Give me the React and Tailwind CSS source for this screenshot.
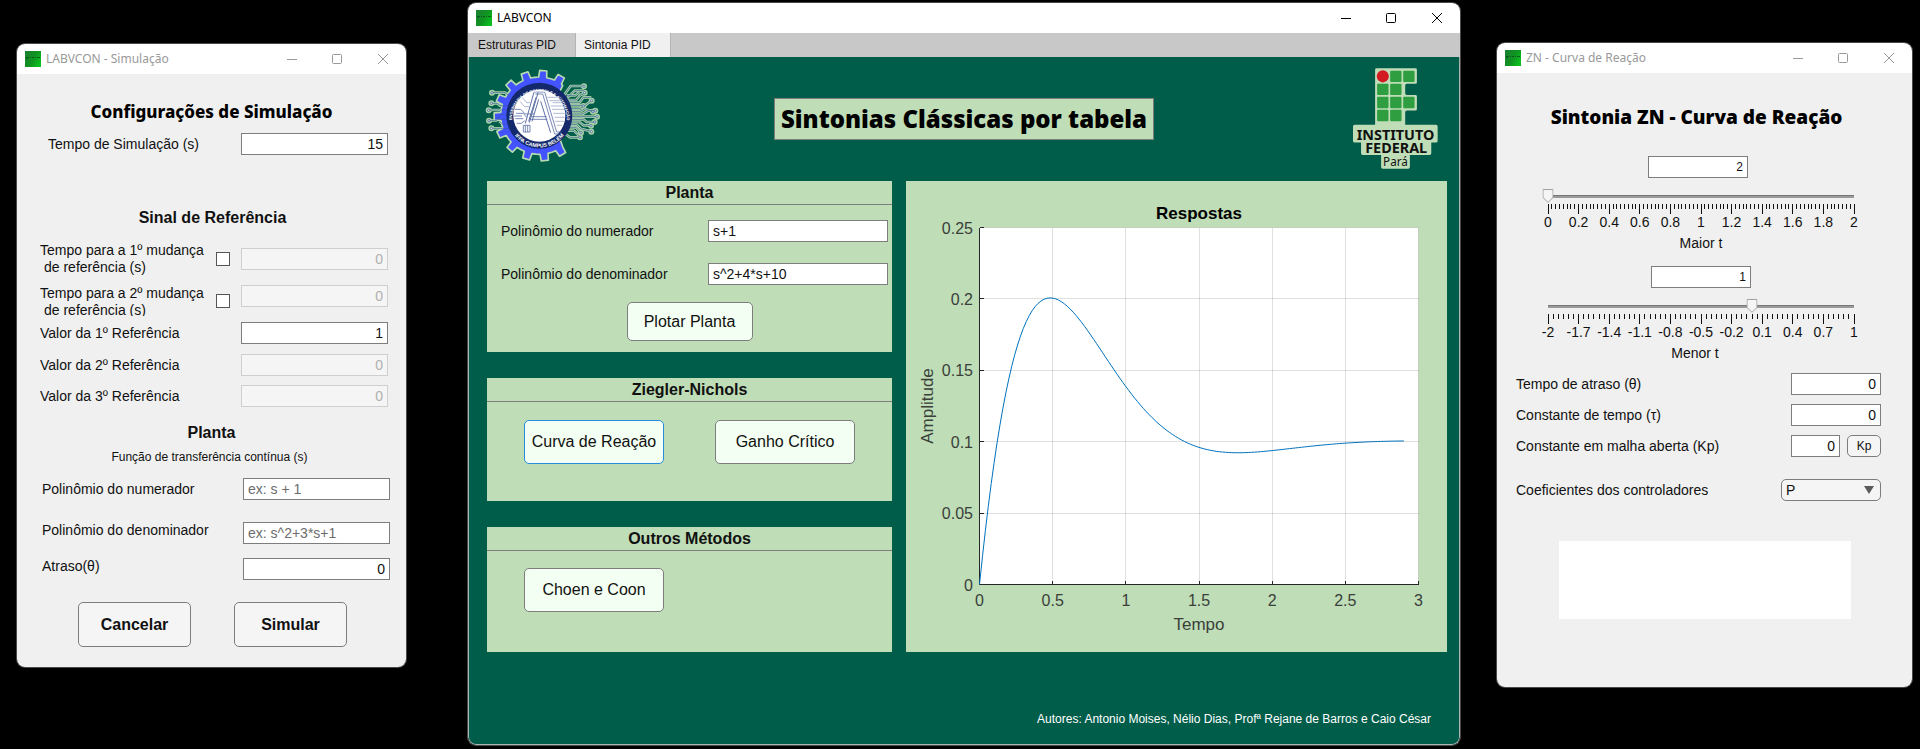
import { useState } from "react";

const cx = (...parts) => parts.filter(Boolean).join(" ");

function AppIcon() {
  return (
    <svg viewBox="0 0 16 16" className="h-4 w-4 shrink-0" aria-hidden="true">
      <defs>
        <linearGradient id="app-icon" x1="0" y1="0" x2="1" y2="0.6">
          <stop offset="0" stopColor="#1c7f34" />
          <stop offset="0.6" stopColor="#0f9420" />
          <stop offset="1" stopColor="#0bbd1f" />
        </linearGradient>
      </defs>
      <rect width="16" height="16" fill="url(#app-icon)" />
      <path d="M1 6.5h3M2 7v1.500M5 6.500h1M7 6.500h2M10 6.500h1M12 6.500h3" stroke="#0c4a1a" strokeWidth="1" fill="none" opacity="0.8" />
    </svg>
  );
}

function WindowFrame({ title, active, className, children }) {
  return (
    <section
      className={cx(
        "flex min-w-0 basis-0 flex-col overflow-hidden rounded-lg ring-1 ring-[#4a4a4a]",
        className
      )}
    >
      <header
        className={cx(
          "flex h-[30px] items-center bg-white pl-2",
          active ? "text-black" : "text-[#999999]"
        )}
      >
        <AppIcon />
        <h1 className="ml-[5px] grow font-['Noto_Sans',sans-serif] text-xs leading-4">{title}</h1>
        <div className="flex items-center">
          <button type="button" aria-label="Minimizar" className="grid h-[30px] w-[45px] place-items-center">
            <svg viewBox="0 0 10 10" className="h-[10px] w-[10px]"><path d="M0 5.500h10" stroke="currentColor" /></svg>
          </button>
          <button type="button" aria-label="Maximizar" className="grid h-[30px] w-[46px] place-items-center">
            <svg viewBox="0 0 10 10" className="h-[10px] w-[10px]"><rect x="0.500" y="0.500" width="9" height="9" rx="1" fill="none" stroke="currentColor" /></svg>
          </button>
          <button type="button" aria-label="Fechar" className="grid h-[30px] w-[46px] place-items-center">
            <svg viewBox="0 0 10 10" className="h-[10px] w-[10px]"><path d="M0 0L10 10M10 0L0 10" stroke="currentColor" /></svg>
          </button>
        </div>
      </header>
      {children}
    </section>
  );
}

const heading = "text-center font-['Noto_Sans',sans-serif] whitespace-nowrap text-black";
const field =
  "h-[22px] border border-[#7d7d7d] bg-white px-1 text-sm text-[#111] disabled:border-[#cfcfcf] disabled:bg-[#f5f5f5] disabled:text-[#b0b0b0] placeholder:text-[#6c6c6c]";

function SimRow({ id, label, value, disabled, className }) {
  return (
    <div className={cx("flex items-center justify-between pr-[18px]", className)}>
      <label htmlFor={id}>{label}</label>
      <input id={id} defaultValue={value} disabled={disabled} className={cx(field, "w-[147px] text-right")} />
    </div>
  );
}

function SimCheckRow({ id, label, className, checkClassName, clip }) {
  return (
    <div className={cx("flex pr-[18px] pl-[23px]", className)}>
      <label htmlFor={id} className={cx("grow leading-[17px]", clip && "h-[31px] overflow-hidden")}>
        {label}
        <br />
        <span className="pl-1">de referência (s)</span>
      </label>
      <input
        type="checkbox"
        aria-label={`Ativar ${label}`}
        className={cx("mr-[11px] h-[14px] w-[14px] shrink-0 appearance-none border border-[#555] bg-white checked:bg-[#2080d0]", checkClassName)}
      />
      <input id={id} defaultValue="0" disabled className={cx(field, "w-[147px] shrink-0 text-right")} />
    </div>
  );
}

function SimulationWindow() {
  const button =
    "h-[45px] w-[113px] rounded-[5px] border border-[#7d7d7d] bg-[#f5f5f5] text-base font-bold";
  return (
    <WindowFrame title="LABVCON - Simulação" className="mt-[44px] ml-[17px] grow-[389]">
      <form className="bg-[#f0f0f0] pt-[26px] pb-5" onSubmit={(e) => e.preventDefault()}>
        <h2 className={cx(heading, "text-[17px] leading-6 font-extrabold")}>Configurações de Simulação</h2>
        <SimRow id="tsim" label="Tempo de Simulação (s)" value="15" className="mt-[9px] pl-[31px]" />
        <h3 className="mt-[53px] pl-[2px] text-center text-base leading-5 font-bold">Sinal de Referência</h3>
        <SimCheckRow id="m1" label="Tempo para a 1º mudança" className="mt-[14px] items-center" />
        <SimCheckRow id="m2" label="Tempo para a 2º mudança" className="mt-[9px] h-8 items-start" checkClassName="self-center" clip />
        <SimRow id="r1" label="Valor da 1º Referência" value="1" className="mt-[5px] pl-[23px]" />
        <SimRow id="r2" label="Valor da 2º Referência" value="0" disabled className="mt-[10px] pl-[23px]" />
        <SimRow id="r3" label="Valor da 3º Referência" value="0" disabled className="mt-[9px] pl-[23px]" />
        <h3 className="mt-[16px] text-center text-base leading-5 font-bold">Planta</h3>
        <p className="mt-[6px] pr-1 text-center text-xs leading-4">Função de transferência contínua (s)</p>
        <div className="flex flex-col gap-[14px] pt-[13px] pr-4 pl-[25px] leading-4">
          <div className="mb-2 flex items-center justify-between">
            <label htmlFor="snum">Polinômio do numerador</label>
            <input id="snum" placeholder="ex: s + 1" className={cx(field, "w-[147px]")} />
          </div>
          <div className="flex items-start justify-between">
            <label htmlFor="sden">Polinômio do denominador</label>
            <input id="sden" placeholder="ex: s^2+3*s+1" className={cx(field, "w-[147px]")} />
          </div>
          <div className="flex items-start justify-between">
            <label htmlFor="satr">Atraso(θ)</label>
            <input id="satr" defaultValue="0" className={cx(field, "w-[147px] text-right")} />
          </div>
        </div>
        <div className="mt-[22px] flex justify-center gap-[43px] pl-[2px]">
          <button type="button" className={button}>Cancelar</button>
          <button type="submit" className={button}>Simular</button>
        </div>
      </form>
    </WindowFrame>
  );
}

/* Gear outline: 11 teeth, 24 degrees apart, open towards the circuit traces on the right. */
function gearPath() {
  const pt = (r, deg) => {
    const a = (deg * Math.PI) / 180;
    return `${(180 + r * Math.cos(a)).toFixed(1)} ${(167 - r * Math.sin(a)).toFixed(1)}`;
  };
  const out = [`M${pt(84, 48)}L${pt(114, 52)}`];
  for (let k = 0; k < 11; k += 1) {
    const c = 61 + 24 * k;
    out.push(`L${pt(116, c - 6)}L${pt(136, c - 4.5)}L${pt(136, c + 4.5)}L${pt(116, c + 6)}`);
    if (k < 10) out.push(`L${pt(116, c + 12)}`);
  }
  out.push(`L${pt(84, 314)}Z`);
  return out.join("");
}

const TRACES = [
  "M92 110L78 98H40", "M88 137H62L54 130H38", "M86 150H30", "M88 163H64L52 181H30", "M86 178H58L50 170", "M88 205H38", "M92 192H70L60 184",
  "M254 106L274 78H312", "M260 118L286 92H314", "M262 106H288L300 96", "M266 120H290L302 106L316 100", "M268 128H300L312 112H336", "M270 136H318L336 122",
  "M272 146H300L314 138", "M272 154H304L316 146L340 155", "M274 162H310L326 152H346", "M274 170H352", "M274 178H312L322 186H345",
  "M272 186H300L312 196H334", "M270 194H292L304 206L334 214", "M268 202H290L304 218", "M264 212H284L300 228", "M258 222L272 232H302",
];
const PADS = [
  [38, 98], [36, 130], [28, 151], [29, 182], [36, 205], [314, 79], [316, 98], [337, 122], [312, 138], [341, 155], [348, 152], [353, 170], [346, 186],
  [335, 197], [336, 215], [305, 218], [302, 232],
];

function CourseLogo() {
  return (
    <svg viewBox="23 24 342 285" className="h-[95px] w-[114px] shrink-0 overflow-visible" role="img" aria-label="Engenharia de Controle e Automação">
      <g fill="none" stroke="#a9d2a6" strokeWidth="8" strokeLinejoin="round">
        {TRACES.map((d) => <path key={d} d={d} />)}
        {PADS.map(([x, y]) => <circle key={`${x}-${y}`} cx={x} cy={y} r="5" />)}
      </g>
      <path d={gearPath()} fill="#4353ff" stroke="#b7dbb0" strokeWidth="5" strokeLinejoin="round" />
      <g fill="none" stroke="#34599a" strokeWidth="2">
        {TRACES.map((d) => <path key={d} d={d} />)}
        {PADS.map(([x, y]) => <circle key={`${x}-${y}`} cx={x} cy={y} r="3.500" fill="#cfe3d8" />)}
      </g>
      <circle cx="180" cy="167" r="99" fill="#14296b" />
      <circle cx="180" cy="167" r="78" fill="#fff" />
      <g fill="none" stroke="#5f72a8" strokeWidth="2.500">
        <path d="M164 96H196L232 216H246M168 102H190L226 222H240" />
        <path d="M164 96L138 190M170 112L148 184M178 118L158 184M184 124L214 218M176 98L150 188" strokeWidth="3" />
        <path d="M152 170H202M150 178H204" />
        <path d="M132 196H152V216H132ZM138 196V216M145 196V216" />
        <path d="M106 148H124L138 162H164M110 160H132L142 172M108 176H132M112 190H126L136 182M104 168H128" />
        <path d="M204 112H250M210 122H254M220 128H252M214 138H254M218 148H256M222 160H256M226 172H256M228 184H254M232 196H248" strokeWidth="1.500" />
        <path d="M122 124L136 140H150M128 112L142 128H152" strokeWidth="1.500" />
      </g>
      <defs>
        <path id="ring-top" d="M98 177A82 82 0 1 1 262 177" />
        <path id="ring-bottom" d="M85 167A95 95 0 0 0 275 167" />
      </defs>
      <g fill="#fff" fontFamily="'Liberation Sans Narrow','Liberation Sans',sans-serif" fontWeight="700" textAnchor="middle">
        <text fontSize="12"><textPath href="#ring-top" startOffset="50%">ENGENHARIA DE CONTROLE E AUTOMAÇÃO</textPath></text>
        <text fontSize="16"><textPath href="#ring-bottom" startOffset="50%">IFPA CAMPUS BELÉM</textPath></text>
      </g>
    </svg>
  );
}

function InstituteLogo() {
  const cells = [[1, 0], [2, 0], [0, 1], [1, 1], [0, 2], [1, 2], [2, 2], [0, 3], [1, 3]];
  return (
    <svg viewBox="1179 203 254 302" className="h-[101px] w-[85px] shrink-0" role="img" aria-label="Instituto Federal Pará">
      <path
        fill="#bfddb7"
        d="M1249 204H1366Q1370 204 1370 208V246Q1370 250 1366 250H1340Q1335 250 1335 255V278Q1335 284 1340 284H1366Q1370 284 1370 288V326Q1370 330 1366 330H1340Q1335 330 1335 335V373H1427Q1432 373 1432 378V421Q1432 426 1427 426H1413V458Q1413 463 1408 463H1349V499Q1349 504 1344 504H1268Q1263 504 1263 499V463H1208Q1203 463 1203 458V426H1184Q1179 426 1179 421V378Q1179 373 1184 373H1245V208Q1245 204 1249 204Z"
      />
      <circle cx="1268" cy="228" r="18" fill="#d11b20" />
      {cells.map(([c, r]) => (
        <rect key={`${c}${r}`} x={1251 + c * 39} y={211 + r * 39} width="34" height="34" rx="3" fill="#2f9e41" />
      ))}
      <text fill="#111" textAnchor="middle" fontFamily="'Noto Sans',sans-serif" fontSize="43" fontWeight="700">
        <tspan x="1306" y="417">INSTITUTO</tspan>
        <tspan x="1308" y="456">FEDERAL</tspan>
        <tspan x="1306" y="495" fontSize="35" fontWeight="400">Pará</tspan>
      </text>
    </svg>
  );
}

function Panel({ title, className, children }) {
  return (
    <section className={cx("bg-[#bfddb7]", className)}>
      <h3 className="h-6 border-b border-[#7d7d7d] text-center text-base leading-[23px] font-bold">{title}</h3>
      {children}
    </section>
  );
}

const panelButton = "rounded-[5px] border bg-[#f3fff2] text-base";

function ResponseChart() {
  const L = 73.5, T = 46.5, W = 439, H = 357;
  const x = (t) => L + (t / 3) * W;
  const y = (v) => T + H - (v / 0.25) * H;
  const w = Math.sqrt(6);
  const pts = [];
  for (let i = 0; i <= 145; i += 1) {
    const t = i * 0.02;
    const v = 0.1 + Math.exp(-2 * t) * (-0.1 * Math.cos(w * t) + (0.8 / w) * Math.sin(w * t));
    pts.push(`${x(t).toFixed(2)},${y(v).toFixed(2)}`);
  }
  const xs = [0, 0.5, 1, 1.5, 2, 2.5, 3];
  const ys = [0, 0.05, 0.1, 0.15, 0.2, 0.25];
  return (
    <svg viewBox="0 0 541 471" className="block w-full bg-[#bfddb7]" fontFamily="'Liberation Sans',Arial,sans-serif" role="img" aria-label="Respostas: amplitude por tempo">
      <rect x={L} y={T} width={W} height={H} fill="#fff" />
      <g stroke="#262626" strokeOpacity="0.15" shapeRendering="crispEdges">
        {xs.slice(1).map((t) => <line key={t} x1={x(t)} x2={x(t)} y1={T} y2={T + H} />)}
        {ys.slice(1).map((v) => <line key={v} x1={L} x2={L + W} y1={y(v)} y2={y(v)} />)}
      </g>
      <g stroke="#262626" fill="none" shapeRendering="crispEdges">
        <path d={`M${L} ${T}V${T + H}H${L + W}`} />
        {xs.map((t) => <line key={t} x1={x(t)} x2={x(t)} y1={T + H} y2={T + H - 4} />)}
        {ys.map((v) => <line key={v} x1={L} x2={L + 4} y1={y(v)} y2={y(v)} />)}
      </g>
      <polyline points={pts.join(" ")} fill="none" stroke="#0072bd" />
      <g fill="#3a3f3a" fontSize="16" textAnchor="middle">
        {xs.map((t) => <text key={t} x={x(t)} y="425">{t}</text>)}
      </g>
      <g fill="#3a3f3a" fontSize="16" textAnchor="end">
        {ys.map((v) => <text key={v} x="67" y={y(v) + 6}>{v}</text>)}
      </g>
      <text x="293" y="38" fontSize="17" fontWeight="700" textAnchor="middle" fill="#000">Respostas</text>
      <text x="293" y="449" fontSize="17" textAnchor="middle" fill="#3a3f3a">Tempo</text>
      <text transform="translate(27 225) rotate(-90)" fontSize="17" textAnchor="middle" fill="#3a3f3a">Amplitude</text>
    </svg>
  );
}

function TuningWindow() {
  return (
    <WindowFrame title="LABVCON" active className="mt-[3px] ml-[62px] grow-[992]">
      <nav className="flex h-6 bg-[#c8c8c8] text-xs" role="tablist">
        <button type="button" role="tab" aria-selected="false" className="w-[107px] pl-[10px] text-left">Estruturas PID</button>
        <button type="button" role="tab" aria-selected="true" className="w-[96px] border-x border-[#b4b4b4] bg-[#f0f0f0] pl-2 text-left">Sintonia PID</button>
      </nav>
      <div className="rounded-b-lg border-x border-b border-[#a9b5b1] bg-[#005d4a] pt-[11px] pr-3 pb-[17px] pl-[18px]">
        <div className="flex items-start justify-between pr-[9px]">
          <CourseLogo />
          <h2 className={cx(heading, "mt-[30px] mr-[26px] h-[42px] w-[380px] border border-[#7d7d7d] bg-[#bfddb7] text-2xl leading-10 font-black")}>
            Sintonias Clássicas por tabela
          </h2>
          <InstituteLogo />
        </div>
        <div className="mt-3 flex items-start gap-[14px]">
          <div className="flex min-w-0 grow-[405] basis-0 flex-col gap-[26px]">
            <Panel title="Planta" className="pb-[11px]">
              <div className="flex flex-col gap-[21px] pt-[15px] pr-1 pl-[14px]">
                <div className="flex items-center justify-between">
                  <label htmlFor="pnum">Polinômio do numerador</label>
                  <input id="pnum" defaultValue="s+1" className={cx(field, "w-[180px]")} />
                </div>
                <div className="flex items-center justify-between">
                  <label htmlFor="pden">Polinômio do denominador</label>
                  <input id="pden" defaultValue="s^2+4*s+10" className={cx(field, "w-[180px]")} />
                </div>
              </div>
              <button type="button" className={cx(panelButton, "mx-auto mt-[17px] block h-[39px] w-[126px] border-[#7d7d7d]")}>Plotar Planta</button>
            </Panel>
            <Panel title="Ziegler-Nichols" className="pb-[37px]">
              <div className="flex justify-between pt-[18px] pr-[37px] pl-[37px]">
                <button type="button" className={cx(panelButton, "h-11 w-[140px] border-[#268cdd]")}>Curva de Reação</button>
                <button type="button" className={cx(panelButton, "h-11 w-[140px] border-[#7d7d7d]")}>Ganho Crítico</button>
              </div>
            </Panel>
            <Panel title="Outros Métodos" className="pb-10">
              <div className="flex pt-[17px] pl-[37px]">
                <button type="button" className={cx(panelButton, "h-11 w-[140px] border-[#7d7d7d]")}>Choen e Coon</button>
              </div>
            </Panel>
          </div>
          <div className="min-w-0 grow-[541] basis-0">
            <ResponseChart />
          </div>
        </div>
        <p className="mt-[59px] pr-4 text-right text-xs leading-4 text-white">
          Autores: Antonio Moises, Nélio Dias, Profª Rejane de Barros e Caio César
        </p>
      </div>
    </WindowFrame>
  );
}

function Slider({ id, label, min, max, start, step, minorPerMajor, labels, captionClassName }) {
  const [value, setValue] = useState(start);
  const count = (labels.length - 1) * minorPerMajor;
  const ticks = Array.from({ length: count + 1 }, (_, i) => i);
  const pct = ((value - min) / (max - min)) * 100;
  return (
    <div className="pr-[58px] pl-[51px]">
      <div className="relative h-[15px]">
        <input
          id={id}
          type="range"
          min={min}
          max={max}
          step={step}
          value={value}
          onChange={(e) => setValue(Number(e.target.value))}
          className="absolute top-[6px] block h-[3px] w-full appearance-none border-t border-[#777] bg-[#9a9a9a] [&::-webkit-slider-thumb]:h-3 [&::-webkit-slider-thumb]:w-3 [&::-webkit-slider-thumb]:appearance-none [&::-webkit-slider-thumb]:bg-transparent"
        />
        <svg viewBox="0 0 11 14" className="pointer-events-none absolute top-0 h-[14px] w-[11px] -translate-x-1/2" style={{ left: `${pct}%` }} aria-hidden="true">
          <path d="M0.500 0.500H10.500V8.500L5.500 13.300L0.500 8.500Z" fill="#f5f5f5" stroke="#a3a3a3" />
        </svg>
      </div>
      <svg className="block h-[10px] w-full overflow-visible" aria-hidden="true" shapeRendering="crispEdges">
        {ticks.map((i) => (
          <line key={i} x1={`${(i / count) * 100}%`} x2={`${(i / count) * 100}%`} y1="0" y2={i % minorPerMajor === 0 ? 10 : 5} stroke="#111" />
        ))}
      </svg>
      <div className="flex justify-between leading-4">
        {labels.map((t) => (
          <span key={t} className="flex w-0 justify-center whitespace-nowrap">{t}</span>
        ))}
      </div>
      <label htmlFor={id} className={cx("mt-[3px] block text-center leading-5", captionClassName)}>{label}</label>
    </div>
  );
}

function CurveWindow() {
  return (
    <WindowFrame title="ZN - Curva de Reação" className="mt-[43px] mr-2 ml-[37px] grow-[415]">
      <div className="bg-[#f0f0f0] pt-[32px] pb-[68px]">
        <h2 className={cx(heading, "pr-4 text-[19px] leading-6 font-black")}>Sintonia ZN - Curva de Reação</h2>
        <div className="mt-[27px] mb-[11px] flex justify-center pr-[13px]">
          <input aria-label="Valor maior t" defaultValue="2" className={cx(field, "w-[100px] text-right text-xs")} />
        </div>
        <Slider
          id="maior" label="Maior t" min={0} max={2} start={0} step={0.025} minorPerMajor={8}
          labels={["0", "0.2", "0.4", "0.6", "0.8", "1", "1.2", "1.4", "1.6", "1.8", "2"]}
        />
        <div className="mt-[13px] mb-[11px] flex justify-center pr-[7px]">
          <input aria-label="Valor menor t" defaultValue="1" className={cx(field, "w-[100px] text-right text-xs")} />
        </div>
        <Slider
          id="menor" label="Menor t" min={-2} max={1} start={0} step={0.05} minorPerMajor={6} captionClassName="pr-3"
          labels={["-2", "-1.7", "-1.4", "-1.1", "-0.8", "-0.5", "-0.2", "0.1", "0.4", "0.7", "1"]}
        />
        <div className="mt-[10px] flex flex-col gap-[9px] pr-[31px] pl-[19px]">
          <div className="flex items-center justify-between">
            <label htmlFor="theta">Tempo de atraso (θ)</label>
            <input id="theta" defaultValue="0" className={cx(field, "w-[90px] text-right")} />
          </div>
          <div className="flex items-center justify-between">
            <label htmlFor="tau">Constante de tempo (τ)</label>
            <input id="tau" defaultValue="0" className={cx(field, "w-[90px] text-right")} />
          </div>
          <div className="flex items-center">
            <label htmlFor="kp" className="grow">Constante em malha aberta (Kp)</label>
            <input id="kp" defaultValue="0" className={cx(field, "w-[49px] text-right")} />
            <button type="button" className="ml-[7px] h-[22px] w-[34px] rounded-[5px] border border-[#7d7d7d] bg-[#f5f5f5] text-xs">Kp</button>
          </div>
          <div className="mt-[13px] flex items-center justify-between">
            <label htmlFor="coef">Coeficientes dos controladores</label>
            <div className="relative">
              <select id="coef" className="block h-[22px] w-[100px] appearance-none rounded-[5px] border border-[#7d7d7d] bg-[#f5f5f5] px-1 text-sm leading-5">
                <option>P</option>
                <option>PI</option>
                <option>PID</option>
              </select>
              <svg viewBox="0 0 10 8" className="pointer-events-none absolute top-[7px] right-[7px] h-2 w-[10px]" aria-hidden="true">
                <path d="M0 0H10L5 8Z" fill="#5c5c5c" />
              </svg>
            </div>
          </div>
        </div>
        <output className="mt-10 mr-[61px] ml-[62px] block h-[78px] bg-white" />
      </div>
    </WindowFrame>
  );
}

export default function App() {
  return (
    <main className="flex min-h-screen items-start bg-black font-['Liberation_Sans',Arial,sans-serif] text-sm text-[#111]">
      <SimulationWindow />
      <TuningWindow />
      <CurveWindow />
    </main>
  );
}
